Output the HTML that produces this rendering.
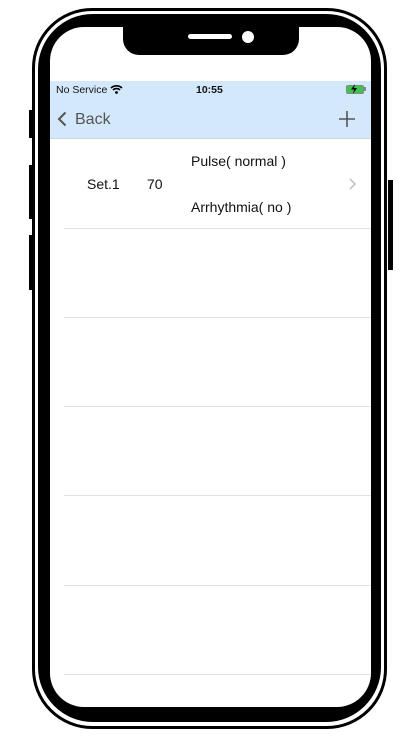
<!DOCTYPE html>
<html><head><meta charset="utf-8"><style>
body{margin:0;width:414px;height:736px;background:#fff;position:relative;overflow:hidden;font-family:"Liberation Sans",sans-serif}
.a{position:absolute}
.outer{left:32px;top:8px;width:349px;height:715px;border:3px solid #000;border-radius:60px}
.inner{left:38px;top:14px;width:343px;height:708px;background:#000;border-radius:55px}
.screen{left:50px;top:27px;width:321px;height:680px;background:#fff;border-radius:34px;overflow:hidden}
.btn{background:#000}
.sep{position:absolute;left:14px;right:0;height:1px;background:#e2e2e2}
</style></head><body>
<div class="a btn" style="left:29px;top:110px;width:4px;height:28px"></div>
<div class="a btn" style="left:29px;top:165px;width:4px;height:54px"></div>
<div class="a btn" style="left:29px;top:235px;width:4px;height:55px"></div>
<div class="a btn" style="left:388px;top:180px;width:5px;height:90px"></div>
<div class="a outer"></div>
<div class="a inner"></div>
<div class="a screen">
 <div class="a" style="left:0;top:54px;width:321px;height:57px;background:#d4e8fb"></div>
 <div class="a" style="left:6px;top:57px;font-size:10.5px;color:#111">No Service
  <svg width="13" height="10" viewBox="0 0 13 10" style="vertical-align:-1px"><path d="M1 4a8 8 0 0 1 11 0M3 6a5 5 0 0 1 7 0" stroke="#000" stroke-width="1.7" fill="none"/><circle cx="6.5" cy="8.5" r="1.4"/></svg></div>
 <div class="a" style="left:146px;top:57px;font-size:10.5px;font-weight:bold;color:#111">10:55</div>
 <div class="a" style="left:296px;top:58px;width:16px;height:7px;border:1px solid #888;border-radius:2px;background:#3dc44f"></div>
 <div class="a" style="left:314px;top:60px;width:1.5px;height:4px;background:#888"></div>
 <svg class="a" style="left:299px;top:57px" width="10" height="10" viewBox="0 0 10 10"><path d="M6 0L2 5.5h3L4 10l4-6H5z" fill="#000"/></svg>
 <svg class="a" style="left:7px;top:84px" width="10" height="16" viewBox="0 0 10 16"><path d="M8.5 1.5L2 8l6.5 6.5" stroke="#555" stroke-width="2" fill="none"/></svg>
 <div class="a" style="left:25px;top:84px;font-size:16px;color:#555">Back</div>
 <svg class="a" style="left:289px;top:84px" width="16" height="16"><path d="M8 0v16M0 8h16" stroke="#555" stroke-width="1.6"/></svg>
 <div class="a" style="left:0;top:111px;width:321px;height:1px;background:#c8d8e8"></div>
 <div class="a" style="left:37px;top:149px;font-size:14px;color:#111">Set.1</div>
 <div class="a" style="left:97px;top:149px;font-size:14px;color:#111">70</div>
 <div class="a" style="left:141px;top:126px;font-size:14px;color:#111">Pulse( normal )</div>
 <div class="a" style="left:141px;top:172px;font-size:14px;color:#111">Arrhythmia( no )</div>
 <svg class="a" style="left:299px;top:151px" width="7" height="12"><path d="M1 1l5 5-5 5" stroke="#bbb" stroke-width="1.4" fill="none"/></svg>
 <div class="sep" style="top:201px"></div>
 <div class="sep" style="top:290px"></div>
 <div class="sep" style="top:379px"></div>
 <div class="sep" style="top:468px"></div>
 <div class="sep" style="top:558px"></div>
 <div class="sep" style="top:647px"></div>
</div>
<div class="a" style="left:123px;top:27px;width:176px;height:28px;background:#000;border-radius:0 0 16px 16px"></div>
<div class="a" style="left:188px;top:34px;width:44px;height:5px;background:#fff;border-radius:3px"></div>
<div class="a" style="left:242px;top:31px;width:12px;height:12px;background:#fff;border-radius:50%"></div>
</body></html>
